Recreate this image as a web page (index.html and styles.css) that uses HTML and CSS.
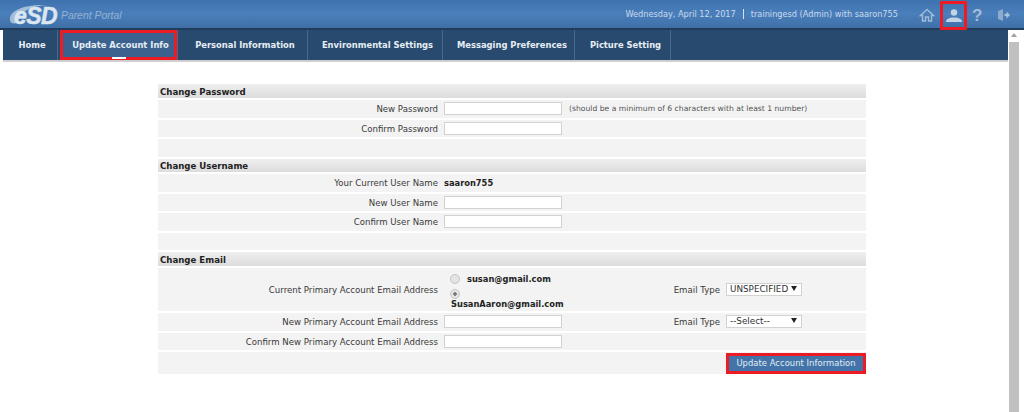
FILE: index.html
```html
<!DOCTYPE html>
<html lang="en">
<head>
<meta charset="utf-8">
<title>Update Account Info</title>
<link rel="stylesheet" href="styles.css">
</head>
<body>
<header class="topbar">
  <div class="brand">
    <svg class="swoosh" width="40" height="24" viewBox="0 0 40 24"><path d="M1 17C0 8 14 1 38 2C24 3 9 8 9 20C4 21 1 20 1 17Z" fill="#a3bcd8"/></svg>
    <span class="logo">eSD</span>
    <span class="portal">Parent Portal</span>
  </div>
  <div class="status">
    <span>Wednesday, April 12, 2017</span>
    <span class="divider"></span>
    <span>trainingesd (Admin) with saaron755</span>
  </div>
  <nav class="tools">
    <svg class="tool" width="16" height="16" viewBox="0 0 16 16"><path d="M8 2.500L1.500 8.500h2v5.500h3V10h3v4h3V8.500h2Z" fill="none" stroke="#a3bcd8" stroke-width="1.400"/></svg>
    <span class="tool-active"><svg width="18" height="16" viewBox="0 0 18 16"><circle cx="9" cy="4.500" r="3.200" fill="#c3d4e7"/><path d="M1 14c0-3 3-4.500 8-4.500s8 1.500 8 4.500Z" fill="#c3d4e7"/></svg></span>
    <span class="help">?</span>
    <svg class="tool" width="16" height="16" viewBox="0 0 16 16"><path d="M2 4l5-2v12l-5-2Z" fill="#8fabcc"/><path d="M8.500 7h2V4.500L14 8l-3.500 3.500V9h-2Z" fill="#a9c1dc"/></svg>
  </nav>
</header>
<div class="frame">
  <div class="content">
    <ul class="menu">
      <li class="item home">Home</li>
      <li class="item update">Update Account Info</li>
      <li class="item personal">Personal Information</li>
      <li class="item env">Environmental Settings</li>
      <li class="item msg">Messaging Preferences</li>
      <li class="item pic">Picture Setting</li>
    </ul>
    <main class="form">
      <h2 class="head">Change Password</h2>
      <div class="row"><div class="label">New Password</div><div class="value"><input class="field" type="text"><span class="hint">(should be a minimum of 6 characters with at least 1 number)</span></div></div>
      <div class="row"><div class="label">Confirm Password</div><div class="value"><input class="field" type="text"></div></div>
      <div class="row"></div>

      <h2 class="head thin">Change Username</h2>
      <div class="row"><div class="label">Your Current User Name</div><div class="value"><strong class="strong">saaron755</strong></div></div>
      <div class="row"><div class="label">New User Name</div><div class="value"><input class="field" type="text"></div></div>
      <div class="row"><div class="label">Confirm User Name</div><div class="value"><input class="field" type="text"></div></div>
      <div class="row"></div>

      <h2 class="head">Change Email</h2>
      <div class="row tall">
        <div class="label">Current Primary Account Email Address</div>
        <div class="value split">
          <div class="emails">
            <div class="email first"><span class="radio"></span><strong class="strong">susan@gmail.com</strong></div>
            <div class="email"><span class="radio on"></span></div>
            <strong class="strong address">SusanAaron@gmail.com</strong>
          </div>
          <div class="type"><span>Email Type</span><span class="select">UNSPECIFIED<i class="arrow"></i></span></div>
        </div>
      </div>
      <div class="row"><div class="label">New Primary Account Email Address</div><div class="value split"><input class="field" type="text"><div class="type"><span>Email Type</span><span class="select">--Select--<i class="arrow"></i></span></div></div></div>
      <div class="row"><div class="label">Confirm New Primary Account Email Address</div><div class="value"><input class="field" type="text"></div></div>
      <div class="row actions"><span class="submit">Update Account Information</span></div>
    </main>
  </div>
  <div class="scrollbar"><span class="up"></span><span class="thumb"></span></div>
</div>
</body>
</html>
```
FILE: styles.css
```css
*, *::before, *::after { box-sizing: border-box; }
html, body { margin: 0; height: 412px; overflow: hidden; }
body { background: #fff; font: 8.6px/12px "DejaVu Sans", Verdana, sans-serif; color: #3a3a3a; }

.topbar { height: 30px; display: flex; align-items: center; padding: 0 0 0 9px; border-bottom: 2px solid #1f3c5a; background: linear-gradient(#3f73b0, #4a7fbb 50%, #3f6fa6); color: #c6d6e8; }
.brand { display: flex; align-items: center; position: relative; height: 24px; margin-top: 3px; }
.swoosh { position: absolute; left: 0; top: -1px; }
.logo { position: relative; margin-left: 5px; font: italic 700 23px/24px "Liberation Sans", sans-serif; color: #dbe6f1; letter-spacing: -0.6px; -webkit-text-stroke: 0.5px #dbe6f1; }
.portal { margin-left: 4px; font: italic 10.4px/16px "Liberation Sans", sans-serif; color: #94b1d1; }
.status { margin-left: auto; display: flex; align-items: center; font-size: 8.2px; color: #c9d8ea; }
.divider { width: 1px; height: 10px; background: #d5e1ee; margin: 0 7px; }
.tools { display: flex; align-items: center; margin: 0 12px 0 21px; width: 93px; height: 28px; flex: none; }
.tool { flex: none; margin-top: 2px; }
.tool-active { width: 27px; height: 29px; margin: 1px 5px 0; align-self: flex-start; border: 3px solid #ed1c24; display: flex; align-items: center; justify-content: center; flex: none; }
.help { font: 700 17px/17px "Liberation Sans", sans-serif; color: #a3bcd8; width: 24px; flex: none; margin-top: 2px; }

.frame { display: flex; height: 382px; }
.content { flex: 1; min-width: 0; }
.scrollbar { width: 16px; padding: 3px 5px 0 1px; display: flex; flex-direction: column; align-items: center; background: #fff; }
.up { width: 6px; height: 4px; border: 3px solid transparent; border-top: 0; border-bottom: 4px solid #a0a0a0; margin-bottom: 5px; }
.thumb { width: 10px; flex: 1; background: #c0c0c0; }

.menu { display: flex; list-style: none; margin: 0 0 0 3px; padding: 0 0 0 1px; height: 32px; background: #284a6e; border-bottom: 2px solid #cfcfcf; }
.item { font: 700 8.4px/30px "DejaVu Sans", Verdana, sans-serif; color: #e6edf4; text-align: center; height: 30px; padding-left: 3px; border-right: 1px solid #47688a; }
.home { width: 54px; }
.update { width: 120px; padding-left: 6px; background: #3b628f; position: relative; box-shadow: inset 0 0 0 2px #284a6e; }
.update::before { content: ""; position: absolute; left: 2px; top: 0; width: 117px; height: 30px; border: 3px solid #ed1c24; }
.update::after { content: ""; position: absolute; left: 54px; top: 27px; width: 14px; height: 2px; background: #fff; }
.personal { width: 130px; padding-left: 5px; }
.env { width: 135px; padding-left: 5px; }
.msg { width: 132px; padding-left: 7px; }
.pic { width: 96px; padding-left: 6px; }

.form { width: 708px; margin: 22px 0 0 158px; }
.head { margin: 0 0 2px; height: 14px; padding: 1px 2px 0; font: 700 8.6px/14px "DejaVu Sans", Verdana, sans-serif; color: #222; background: linear-gradient(#efefef, #dcdcdc); }
.head.thin { height: 13.5px; line-height: 13px; }
.row { display: flex; height: 17.5px; margin-bottom: 2px; background: #f3f3f3; }
.label { width: 283px; padding: 1px 3px 0 0; text-align: right; align-self: center; }
.value { flex: 1; display: flex; align-items: center; margin-left: 2px; padding-left: 1px; }
.row.tall { height: 43px; }
.field { width: 118px; height: 13px; margin: 0; padding: 0; background: #fff; border: 1px solid #d2d2d2; border-radius: 0; }
.hint { margin-left: 7px; font-size: 7.65px; color: #555; }
.strong { font-weight: 700; font-size: 8.3px; color: #222; }
.split { justify-content: space-between; }
.emails { display: flex; flex-direction: column; }
.email { display: flex; align-items: center; height: 15px; }
.email.first { margin-top: 2px; }
.address { padding-left: 7px; margin-top: -3px; }
.radio { width: 10px; height: 10px; margin: 0 7px 0 6px; border-radius: 50%; background: #e4e4e4; border: 1px solid #c4c4c4; flex: none; }
.radio.on { background: radial-gradient(#777 0 1.5px, #e4e4e4 2px); }
.type { display: flex; align-items: center; gap: 6px; width: 140px; justify-content: flex-end; margin-right: 64px; flex: none; }
.select { width: 76px; height: 13px; padding-left: 3px; font-size: 8.8px; line-height: 11px; background: #fff; border: 1px solid #d2d2d2; position: relative; color: #333; }
.arrow { position: absolute; right: 4px; top: 2px; border: 3px solid transparent; border-top: 5px solid #222; border-bottom: 0; }
.row.actions { height: 22px; margin: 0; justify-content: flex-end; }
.submit { width: 140px; height: 21px; margin-top: 1px; border: 3px solid #ed1c24; background: #4374a9; color: #e6edf4; font-size: 8.4px; line-height: 14px; text-align: center; letter-spacing: 0.05px; }
```
